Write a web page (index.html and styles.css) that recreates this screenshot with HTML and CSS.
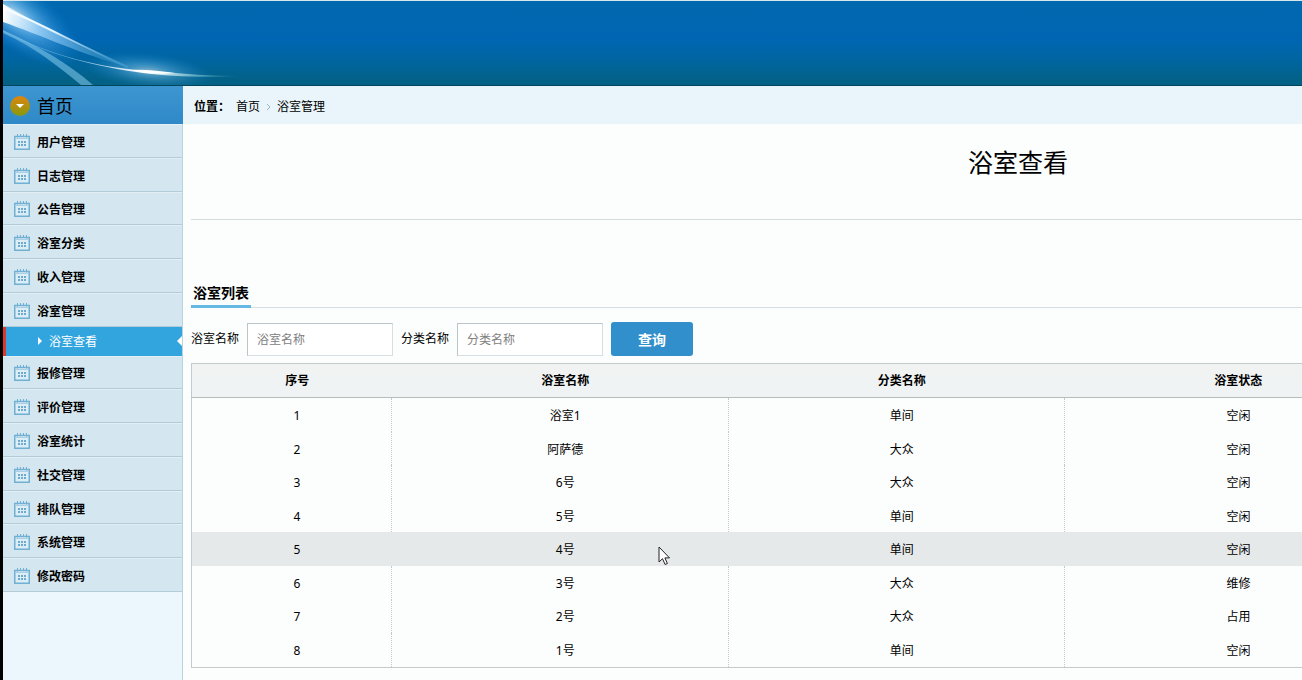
FILE: index.html
```html
<!DOCTYPE html>
<html lang="zh-CN">
<head>
<meta charset="utf-8" />
<title>浴室管理</title>
<link rel="stylesheet" href="styles.css">
</head>

<body>
<svg class="defs" width="0" height="0">
  <symbol id="cal" viewBox="0 0 16 16">
    <path d="M.75 2.500h14.500v12.750H.75z" fill="#dcedf6" stroke="#6fb0d3" stroke-width="1.500"/>
    <path d="M1 4.500h14" stroke="#a9d0e4"/>
    <path d="M3.500 0v3.500M6.500 0v2M9.500 0v2M12.500 0v3.500" stroke="#6fb0d3"/>
    <path d="M4 8h8M4 11h8" stroke="#6aabcf" stroke-width="2" stroke-dasharray="2 1"/>
  </symbol>
</svg>
<div class="top">
  <svg class="light" width="260" height="84" viewBox="0 0 260 84">
    <defs>
      <filter id="soft"><feGaussianBlur stdDeviation=".7"/></filter>
      <radialGradient id="g1"><stop offset="0" stop-color="#fff"/><stop offset=".3" stop-color="#8fd0fb" stop-opacity=".8"/><stop offset="1" stop-color="#1b8be0" stop-opacity="0"/></radialGradient>
      <linearGradient id="g2"><stop offset="0" stop-color="#fff"/><stop offset=".3" stop-color="#a5d8fb" stop-opacity=".7"/><stop offset="1" stop-color="#4aa6dc" stop-opacity=".2"/></linearGradient>
      <linearGradient id="g3"><stop offset="0" stop-color="#6fbdf0" stop-opacity=".3"/><stop offset=".6" stop-color="#fff"/><stop offset="1" stop-color="#6cc" stop-opacity="0"/></linearGradient>
      <linearGradient id="g5"><stop offset="0" stop-color="#fff"/><stop offset=".4" stop-color="#e2f5ff"/><stop offset="1" stop-color="#5fb4e4" stop-opacity=".3"/></linearGradient>
    </defs>
    <ellipse cx="12" cy="14" rx="78" ry="32" transform="rotate(36 12 14)" fill="url(#g1)" opacity=".75"/>
    <ellipse cx="146" cy="70" rx="66" ry="18" transform="rotate(6 146 70)" fill="url(#g1)" opacity=".5"/>
    <g filter="url(#soft)">
      <path d="M0 3C35 22 75 47 125 66C80 54 35 33 0 21Z" fill="url(#g2)"/>
      <path d="M0 7C35 21 75 44 125 66" fill="none" stroke="url(#g5)" stroke-width="2"/>
      <path d="M0 29C45 54 100 68 150 70C180 73 210 75 240 75C200 77 165 75 140 72C95 66 45 54 0 31Z" fill="url(#g3)"/>
      <path d="M0 29C35 45 65 62 90 84H78C55 65 30 45 0 32Z" fill="#7cc3e6" opacity=".6"/>
      <path d="M128 69C142 68 156 70 172 72C156 74 140 72 128 69Z" fill="#fff" opacity=".9"/>
    </g>
  </svg>
</div>
<div class="wrap">
  <div class="left">
    <div class="lefttop">
      <svg width="20" height="20" viewBox="0 0 20 20">
        <defs><linearGradient id="g4" x2="0" y2="1"><stop offset="0" stop-color="#e0850d"/><stop offset="1" stop-color="#86990f"/></linearGradient></defs>
        <circle cx="10" cy="10" r="10" fill="url(#g4)"/>
        <path d="M6 8h8l-4 4z" fill="#fff"/>
      </svg>
      <a href="#">首页</a>
    </div>
    <ul class="menu">
      <li><svg class="ico"><use href="#cal"/></svg><a href="#">用户管理</a></li>
      <li><svg class="ico"><use href="#cal"/></svg><a href="#">日志管理</a></li>
      <li><svg class="ico"><use href="#cal"/></svg><a href="#">公告管理</a></li>
      <li><svg class="ico"><use href="#cal"/></svg><a href="#">浴室分类</a></li>
      <li><svg class="ico"><use href="#cal"/></svg><a href="#">收入管理</a></li>
      <li><svg class="ico"><use href="#cal"/></svg><a href="#">浴室管理</a></li>
      <li class="active"><a href="#">浴室查看</a></li>
      <li><svg class="ico"><use href="#cal"/></svg><a href="#">报修管理</a></li>
      <li><svg class="ico"><use href="#cal"/></svg><a href="#">评价管理</a></li>
      <li><svg class="ico"><use href="#cal"/></svg><a href="#">浴室统计</a></li>
      <li><svg class="ico"><use href="#cal"/></svg><a href="#">社交管理</a></li>
      <li><svg class="ico"><use href="#cal"/></svg><a href="#">排队管理</a></li>
      <li><svg class="ico"><use href="#cal"/></svg><a href="#">系统管理</a></li>
      <li><svg class="ico"><use href="#cal"/></svg><a href="#">修改密码</a></li>
    </ul>
  </div>
  <div class="right">
    <div class="place">
      <b>位置：</b>
      <a href="#">首页</a>
      <svg width="5" height="8" viewBox="0 0 5 8"><path d="M1 1l3 3-3 3" fill="none" stroke="#9fb4bf"/></svg>
      <a href="#">浴室管理</a>
    </div>
    <div class="page">
      <h1>浴室查看</h1>
      <div class="tabs"><a href="#" class="selected">浴室列表</a></div>
      <form class="search">
        <label for="name">浴室名称</label>
        <input type="text" id="name" placeholder="浴室名称">
        <label for="type">分类名称</label>
        <input type="text" id="type" placeholder="分类名称">
        <button type="button">查询</button>
      </form>
      <table class="list">
        <thead>
          <tr><th class="num">序号</th><th>浴室名称</th><th>分类名称</th><th>浴室状态</th></tr>
        </thead>
        <tbody>
          <tr><td>1</td><td>浴室1</td><td>单间</td><td>空闲</td></tr>
          <tr><td>2</td><td>阿萨德</td><td>大众</td><td>空闲</td></tr>
          <tr><td>3</td><td>6号</td><td>大众</td><td>空闲</td></tr>
          <tr><td>4</td><td>5号</td><td>单间</td><td>空闲</td></tr>
          <tr class="hover"><td>5</td><td>4号</td><td>单间</td><td>空闲</td></tr>
          <tr><td>6</td><td>3号</td><td>大众</td><td>维修</td></tr>
          <tr><td>7</td><td>2号</td><td>大众</td><td>占用</td></tr>
          <tr><td>8</td><td>1号</td><td>单间</td><td>空闲</td></tr>
        </tbody>
      </table>
    </div>
  </div>
</div>
<svg class="cursor" width="13" height="20" viewBox="0 0 13 20"><path d="M1 1v15l3.500-3.300 2.600 5.800 2.300-1-2.500-5.600h4.600z" fill="#fff" stroke="#222"/></svg>
</body>
</html>
```

FILE: styles.css
```css
*{
	margin:0;
	padding:0;
	box-sizing:border-box;
	}
body{
	font:12px/18px "Noto Sans","Noto Sans CJK SC",sans-serif;
	color:#000;
	background:#fcfefe;
	border-left:3px solid #000;
	min-height:100vh;
	display:flex;
	flex-direction:column;
	overflow:hidden;
	}
a{
	color:#000;
	text-decoration:none;
	}
li{
	list-style:none;
	}
.defs{
	position:absolute;
	}
.top{
	height:86px;
	border-top:1px solid #d8e8ee;
	border-bottom:1px solid #02465c;
	background:linear-gradient(#0068ae,#0066b3 45%,#00659c 75%,#036186 95%);
	}
.light{
	display:block;
	}
.wrap{
	flex:1;
	display:flex;
	}
/*左侧菜单*/
.left{
	flex:0 0 180px;
	background:#ecf6fd;
	border-right:1px solid #b7d5df;
	}
.lefttop{
	height:38px;
	margin-right:-1px;
	padding-top:2px;
	padding-left:7px;
	display:flex;
	align-items:center;
	gap:7px;
	background:linear-gradient(#3d96d1,#2f89c7);
	font-size:18px;
	}
.menu{
	height:468px;
	display:flex;
	flex-direction:column;
	}
.menu li{
	flex:1;
	padding-left:11px;
	display:flex;
	align-items:center;
	gap:7px;
	background:#d4e6ef;
	border-bottom:1px solid #b3ccd8;
	box-shadow:inset 0 1px #e2f0f6;
	font-weight:bold;
	padding-top:3px;
	}
.menu li a{
	padding-top:2px;
	}
.ico{
	width:16px;
	height:16px;
	}
.menu li.active{
	flex:0 0 29px;
	padding-top:0;
	padding-left:32px;
	background:#32a5df;
	border:0;
	border-left:3px solid #d8382f;
	box-shadow:none;
	font-weight:normal;
	}
.menu li.active:before{
	content:"";
	border:4px solid transparent;
	border-left-color:#fff;
	border-right:0;
	}
.menu li.active:after{
	content:"";
	margin-left:auto;
	border:5px solid transparent;
	border-right-color:#fff;
	border-left:0;
	}
.menu li.active a{
	color:#fff;
	}
/*右侧内容*/
.right{
	flex:1;
	min-width:0;
	overflow:hidden;
	}
.place{
	height:38px;
	padding-top:3px;
	padding-left:11px;
	display:flex;
	align-items:center;
	gap:6px;
	background:#e9f5fa;
	}
.page{
	min-width:1670px;
	padding:0 8px;
	}
h1{
	height:96px;
	padding-top:20px;
	border-bottom:1px solid #d5dcdc;
	font-size:25px;
	line-height:36px;
	font-weight:normal;
	text-align:center;
	}
.tabs{
	height:88px;
	display:flex;
	align-items:flex-end;
	border-bottom:1px solid #d5dfe2;
	}
.tabs .selected{
	height:24px;
	margin-bottom:-1px;
	padding:0 2px;
	border-bottom:3px solid #64b8e2;
	font-size:14px;
	font-weight:bold;
	}
.search{
	padding:14px 0 7px;
	display:flex;
	align-items:center;
	gap:8px;
	}
.search input{
	width:146px;
	height:33px;
	padding:0 9px;
	border:1px solid #b9c5c8;
	border-right-color:#d5dfe2;
	border-bottom-color:#d5dfe2;
	background:#fff;
	font:inherit;
	}
.search input::placeholder{
	color:#808080;
	}
.search button{
	width:82px;
	height:34px;
	border:0;
	border-radius:3px;
	background:#318fcc;
	color:#fff;
	font:bold 14px "Noto Sans CJK SC",sans-serif;
	}
.list{
	width:73.2%;
	height:305px;
	table-layout:fixed;
	border-collapse:collapse;
	border:1px solid #c5cbcb;
	}
.list th{
	height:34px;
	background:linear-gradient(#f1f3f2,#eff3f4);
	border-bottom:1px solid #b7bdbd;
	text-indent:11px;
	}
.list .num{
	width:200px;
	}
.list td{
	padding-top:2px;
	border-right:1px dotted #c3c9c9;
	text-align:center;
	text-indent:11px;
	}
.list .hover td{
	background:#e6e9ea;
	border-right-color:#e6e9ea;
	}
.cursor{
	position:absolute;
	left:658px;
	top:546px;
	}
```
